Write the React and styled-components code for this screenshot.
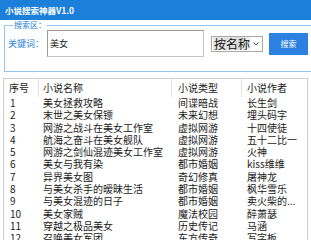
import React from 'react'
import styled, { createGlobalStyle } from 'styled-components'

const GlobalStyle = createGlobalStyle`
  html, body {
    margin: 0;
    padding: 0;
    background: #fff;
    overflow: hidden;
  }
  body {
    font-family: "Noto Sans CJK SC", "Noto Sans", sans-serif;
    color: #1a1a1a;
  }
`

const Window = styled.div`
  width: 311px;
  height: 240px;
  overflow: hidden;
  display: flex;
  flex-direction: column;
`

const TitleBar = styled.div`
  height: 20px;
  flex: none;
  background: #1c80da;
  color: #fff;
  font-size: 8.5px;
  font-weight: bold;
  display: flex;
  align-items: center;
  padding-left: 5px;
`

const GroupBox = styled.fieldset`
  margin: 0 -6px 0 4px;
  padding: 0 0 0 3px;
  height: 52px;
  flex: none;
  box-sizing: border-box;
  border: 1px solid #92c6f0;
  display: flex;
  align-items: center;
`

const Legend = styled.legend`
  color: #2a84d8;
  font-size: 8px;
  padding: 0 1px;
  margin-left: 5px;
  line-height: 10px;
`

const Label = styled.span`
  color: #2a84d8;
  font-size: 9px;
  width: 39px;
`

const Input = styled.div`
  width: 157px;
  height: 27px;
  box-sizing: border-box;
  border: 1px solid #c4c4c4;
  border-top-color: #9a9a9a;
  border-left-color: #9a9a9a;
  font-size: 9px;
  padding-left: 2px;
  display: flex;
  align-items: center;
`

const Select = styled.div`
  margin-left: 7px;
  width: 52px;
  height: 16px;
  box-sizing: border-box;
  border: 1px solid #a9a9a9;
  display: flex;
  align-items: center;
  padding: 0 1px;
`

const SelectValue = styled.span`
  font-size: 12px;
  line-height: 13px;
  padding: 0 1px;
  background: linear-gradient(90deg, #e8e8e8, #dcdcdc 70%, #f4f4f4);
  color: #111;
`

const Chevron = styled.svg`
  margin-left: auto;
  margin-right: 2px;
`

const Button = styled.div`
  margin-left: 6px;
  width: 39px;
  height: 22px;
  background: #2c80e2;
  color: #fff;
  font-size: 8px;
  display: flex;
  align-items: center;
  justify-content: center;
`

const Table = styled.div`
  margin: 6px 3px 0 3px;
  border: 1px solid #cfcfcf;
  border-bottom: none;
  flex: 1;
  font-size: 10px;
`

const Row = styled.div`
  display: grid;
  grid-template-columns: 35px 133px 70px 1fr;
  height: ${p => (p.$head ? '18px' : '12.3px')};
  line-height: ${p => (p.$head ? '18px' : '12.3px')};
`

const Cell = styled.div`
  padding-left: ${p => p.$pad || 5}px;
  white-space: nowrap;
  border-right: ${p => (p.$head ? '1px solid #e2e2e2' : 'none')};
`

const rows = [
  ['1', '美女拯救攻略', '间谍暗战', '长生剑'],
  ['2', '末世之美女保镖', '未来幻想', '埋头码字'],
  ['3', '网游之战斗在美女工作室', '虚拟网游', '十四使徒'],
  ['4', '航海之奋斗在美女舰队', '虚拟网游', '五十二比一'],
  ['5', '网游之剑仙混迹美女工作室', '虚拟网游', '火神'],
  ['6', '美女与我有染', '都市婚姻', 'kiss维维'],
  ['7', '异界美女图', '奇幻修真', '屠神龙'],
  ['8', '与美女杀手的暧昧生活', '都市婚姻', '枫华雪乐'],
  ['9', '与美女混迹的日子', '都市婚姻', '卖火柴的...'],
  ['10', '美女家贼', '魔法校园', '醉萧瑟'],
  ['11', '穿越之极品美女', '历史传记', '马涵'],
  ['12', '召唤美女军团', '东方传奇', '写字板'],
]

export default function App() {
  return (
    <Window>
      <GlobalStyle />
      <TitleBar>小说搜索神器V1.0</TitleBar>
      <GroupBox>
        <Legend>搜索区：</Legend>
        <Label>关键词：</Label>
        <Input>美女</Input>
        <Select>
          <SelectValue>按名称</SelectValue>
          <Chevron width="6" height="4" viewBox="0 0 6 4">
            <path d="M0.5 0.5 L3 3 L5.5 0.5" fill="none" stroke="#555" strokeWidth="1" />
          </Chevron>
        </Select>
        <Button>搜索</Button>
      </GroupBox>
      <Table>
        <Row $head>
          <Cell $head $pad={5}>序号</Cell>
          <Cell $head $pad={4}>小说名称</Cell>
          <Cell $head $pad={6}>小说类型</Cell>
          <Cell $pad={5}>小说作者</Cell>
        </Row>
        {rows.map(r => (
          <Row key={r[0]}>
            <Cell $pad={6}>{r[0]}</Cell>
            <Cell $pad={4}>{r[1]}</Cell>
            <Cell $pad={6}>{r[2]}</Cell>
            <Cell $pad={5}>{r[3]}</Cell>
          </Row>
        ))}
      </Table>
    </Window>
  )
}
